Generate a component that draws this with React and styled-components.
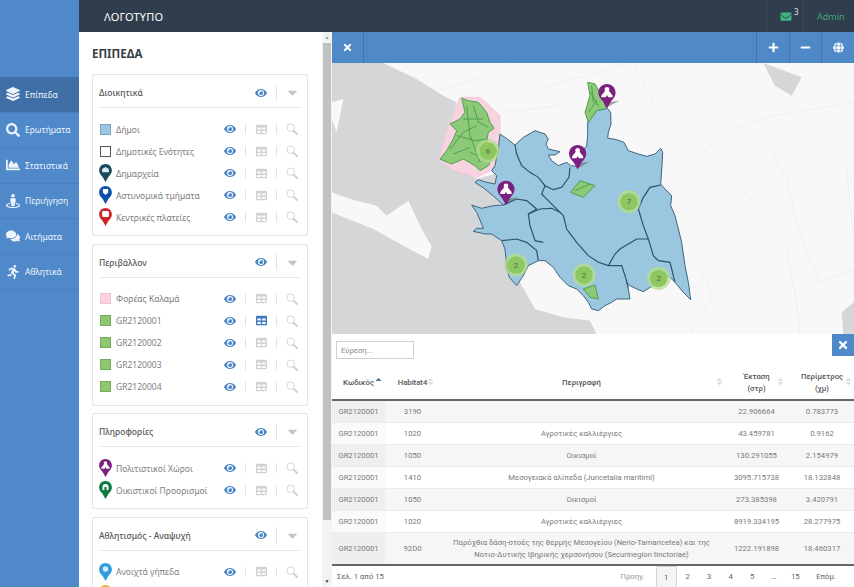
import React from "react";
import styled, { createGlobalStyle } from "styled-components";
import {
  FaCaretDown,
  FaChartArea,
  FaComments,
  FaEnvelope,
  FaEye,
  FaGlobe,
  FaLayerGroup,
  FaMinus,
  FaPlus,
  FaRunning,
  FaSearch,
  FaSort,
  FaSortUp,
  FaStreetView,
  FaTable,
  FaTimes,
} from "react-icons/fa";

const navItems = [
  { label: "Επίπεδα", Icon: FaLayerGroup, active: true },
  { label: "Ερωτήματα", Icon: FaSearch },
  { label: "Στατιστικά", Icon: FaChartArea },
  { label: "Περιήγηση", Icon: FaStreetView },
  { label: "Αιτήματα", Icon: FaComments },
  { label: "Αθλητικά", Icon: FaRunning },
];

const layerGroups = [
  {
    title: "Διοικητικά",
    layers: [
      { name: "Δήμοι", swatch: ["#9cc8e4", "#7da3bd"] },
      { name: "Δημοτικές Ενότητες", swatch: ["#ffffff", "#555555"] },
      { name: "Δημαρχεία", pin: "#1c4a5a", glyph: "hall" },
      { name: "Αστυνομικά τμήματα", pin: "#0f4fa8", glyph: "shield" },
      { name: "Κεντρικές πλατείες", pin: "#d0232a", glyph: "square" },
    ],
  },
  {
    title: "Περιβάλλον",
    layers: [
      { name: "Φορέας Καλαμά", swatch: ["#fbd3df", "#f6c0d0"] },
      { name: "GR2120001", swatch: ["#8ec76f", "#74ad5c"], tableOn: true },
      { name: "GR2120002", swatch: ["#8ec76f", "#74ad5c"] },
      { name: "GR2120003", swatch: ["#8ec76f", "#74ad5c"] },
      { name: "GR2120004", swatch: ["#8ec76f", "#74ad5c"] },
    ],
  },
  {
    title: "Πληροφορίες",
    layers: [
      { name: "Πολιτιστικοί Χώροι", pin: "#7c1f7e", glyph: "tent" },
      { name: "Οικιστικοί Προορισμοί", pin: "#0e7a44", glyph: "arch" },
    ],
  },
  {
    title: "Αθλητισμός - Αναψυχή",
    layers: [
      { name: "Ανοιχτά γήπεδα", pin: "#2f9fdc", glyph: "ball" },
      { name: "", pin: "#f0b030", glyph: "square" },
    ],
  },
];

const columns = [
  { label: "Κωδικός", width: 53, sorted: true, sortRight: 3 },
  { label: "Habitat4", width: 55 },
  { label: "Περιγραφή", width: 283, sortRight: 0 },
  { label: "Έκταση\n(στρ)", width: 67 },
  { label: "Περίμετρος\n(χμ)", width: 64, sortRight: 2 },
];

const rows = [
  ["3190", "", "22.906664", "0.783773"],
  ["1020", "Αγροτικές καλλιέργιες", "43.459781", "0.9162"],
  ["1050", "Οικισμοί", "130.291055", "2.154979"],
  ["1410", "Μεσογειακά αλίπεδα (Juncetalia maritimi)", "3095.715738", "18.132848"],
  ["1050", "Οικισμοί", "273.385398", "3.420791"],
  ["1020", "Αγροτικές καλλιέργιες", "8919.334195", "28.277975"],
  [
    "92D0",
    "Παρόχθια δάση-στοές της θερμής Μεσογείου (Nerio-Tamaricetea) και της Νοτιο-Δυτικής Ιβηρικής χερσονήσου (Securinegion tinctoriae)",
    "1222.191898",
    "18.460317",
  ],
];

const pages = ["1", "2", "3", "4", "5", "…", "15"];

const outline =
  "M503 160L530 125L562 118L572 130L573 165L565 190L563 207L590 212L612 220L625 245L655 255L680 262L705 255L722 238L728 250L726 290L722 345L735 360L755 380L752 410L765 440L775 480L785 520L795 590L805 640L812 692L790 670L765 640L745 620L735 630L715 640L695 652L670 668L650 660L630 650L620 640L625 660L630 690L612 690L590 690L575 700L555 710L535 725L515 720L505 700L490 680L470 660L445 650L420 625L400 595L375 575L355 575L325 590L310 620L290 650L268 625L260 590L255 540L245 515L215 495L195 495L160 487L170 478L190 478L185 465L170 430L155 408L185 418L220 410L250 408L225 385L195 360L165 340L175 332L200 340L225 345L230 320L215 305L225 290L235 240L240 195L262 210L285 228L310 205L345 185L375 195L385 210L378 225L385 240L420 248L405 258L385 258L395 275L415 290L440 280L452 290L470 292L475 270L490 240L500 232L503 200Z";

const borders = [
  "M285 228L290 255L305 290L330 310L355 325L375 350L400 362L425 355L447 325L450 295",
  "M375 350L365 375L375 385L400 410L430 440L440 480L470 520L505 560L535 580L565 590L605 590L615 620L625 655",
  "M250 408L290 390L320 395L350 420L325 435L330 470L345 515L370 520",
  "M325 435L360 420L395 418L420 430",
  "M245 515L290 510L320 520L350 545L355 575",
  "M655 420L670 385L690 355L722 348",
  "M655 420L670 470L685 510L700 560L715 575L750 580L765 640",
  "M565 590L585 555L600 540L625 525L650 510L685 510",
];

const roads = [
  "M60 60L120 45L190 25L260 -17",
  "M320 100L350 60L420 40L500 20L610 -17",
  "M640 -17L700 100L760 170L860 240L960 170L1060 140L1302 100",
  "M850 240L940 330L1000 400L1100 540L1130 700L1140 795",
  "M1000 180L1050 240L1100 330L1140 500L1200 640L1302 600",
  "M250 130L420 110L480 130",
  "M1210 190L1280 300L1300 500",
  "M840 600L880 680L810 795",
];

const greenVeins =
  "M90 240L130 190L170 170M140 110L150 200L180 280M110 200L165 215L205 210M130 150L190 150M150 250L200 270M100 255L150 235M160 110L175 160L205 175M512 70L535 112M505 130L530 95M515 50L520 100M465 365L510 345";

const clusters = [
  { x: 204, y: 246, n: 6 },
  { x: 627, y: 398, n: 7 },
  { x: 288, y: 588, n: 2 },
  { x: 492, y: 618, n: 2 },
  { x: 716, y: 628, n: 2 },
];

const mapPins = [
  { x: 232, y: 335 },
  { x: 447, y: 228 },
  { x: 535, y: 45 },
];

const GlobalStyle = createGlobalStyle`
  html, body {
    margin: 0;
    height: 100%;
    overflow: hidden;
    background: #fff;
  }
  #root {
    height: 100%;
  }
`;

const Page = styled.div`
  display: flex;
  height: 587px;
  font-family: "Noto Sans", sans-serif;
  overflow: hidden;
`;

const Sidebar = styled.nav`
  width: 79px;
  flex: none;
  padding-top: 77px;
  background: #4f89c9;
`;

const NavItem = styled.div`
  display: flex;
  align-items: center;
  gap: 5px;
  height: 35.5px;
  box-sizing: border-box;
  padding-left: 6px;
  color: #eef4fb;
  font-size: 8.5px;
  background: ${(p) => (p.$active ? "#3f6fa6" : "transparent")};
  border-bottom: 1px solid #4880bf;
  svg {
    width: 14px;
    height: 14px;
    flex: none;
  }
`;

const Content = styled.div`
  flex: 1;
  min-width: 0;
  display: flex;
  flex-direction: column;
`;

const TopBar = styled.header`
  display: flex;
  align-items: stretch;
  height: 32px;
  flex: none;
  background: #2f3d4c;
  color: #fff;
`;

const Logo = styled.div`
  flex: 1;
  align-self: center;
  padding-left: 25px;
  font-size: 11px;
  letter-spacing: 0.2px;
`;

const Mail = styled.div`
  position: relative;
  width: 38px;
  display: flex;
  align-items: center;
  padding-left: 13px;
  box-sizing: border-box;
  border-left: 1px solid #3b4958;
  border-right: 1px solid #3b4958;
  color: #3fb37f;
  svg {
    width: 12px;
    height: 11px;
  }
`;

const MailCount = styled.sup`
  position: absolute;
  left: 27px;
  top: 8px;
  font-size: 8px;
  line-height: 1;
  color: #dfe6ea;
`;

const UserName = styled.div`
  width: 50px;
  display: flex;
  align-items: center;
  padding-left: 13px;
  box-sizing: border-box;
  font-size: 9px;
  color: #3fa67a;
`;

const Body = styled.div`
  flex: 1;
  min-height: 0;
  display: flex;
`;

const LayerPanel = styled.aside`
  width: 243px;
  flex: none;
  box-sizing: border-box;
  padding: 15px 14px 0 13px;
  overflow: hidden;
  background: #fff;
`;

const PanelTitle = styled.h2`
  margin: 0 0 14px;
  font-size: 11.5px;
  line-height: 13px;
  font-weight: 700;
  color: #3a3f44;
`;

const Card = styled.section`
  margin-bottom: 7.5px;
  padding: 0 6px 7px;
  background: #fff;
  border: 1px solid #e4e4e4;
  border-radius: 3px;
  box-shadow: 0 0 1px rgba(0, 0, 0, 0.08);
`;

const CardHeader = styled.div`
  display: flex;
  align-items: center;
  height: 29px;
  padding-top: 3px;
  margin-bottom: 10px;
  border-bottom: 1px solid #e8e8e8;
  color: #555;
  font-size: 8.5px;
  font-weight: 500;
`;

const RowLabel = styled.div`
  flex: 1;
  min-width: 0;
  white-space: nowrap;
`;

const Layer = styled.div`
  display: flex;
  align-items: center;
  height: 22px;
  color: #7d7d7d;
  font-size: 8.5px;
`;

const LegendSlot = styled.div`
  width: 13px;
  margin-right: 4px;
  flex: none;
  display: flex;
  justify-content: center;
`;

const Swatch = styled.span`
  width: 11px;
  height: 11px;
  box-sizing: border-box;
  background: ${(p) => p.$fill};
  border: 1px solid ${(p) => p.$stroke};
`;

const Actions = styled.div`
  display: flex;
  align-items: center;
  margin-right: -6px;
`;

const Action = styled.div`
  width: 30px;
  display: flex;
  justify-content: center;
  align-items: center;
  color: ${(p) => p.$color || "#cfcfcf"};
  svg {
    width: ${(p) => p.$size || 11}px;
    height: ${(p) => p.$size || 11}px;
  }
`;

const Divider = styled.span`
  width: 1px;
  height: ${(p) => p.$height || 10}px;
  background: #e2e2e2;
`;

const Scrollbar = styled.div`
  width: 10px;
  flex: none;
  display: flex;
  flex-direction: column;
  align-items: center;
  background: #f3f3f3;
`;

const ScrollArrow = styled.span`
  flex: none;
  height: 11px;
  line-height: 11px;
  font-size: 5px;
  color: ${(p) => p.$color};
`;

const ScrollTrack = styled.div`
  flex: 1;
  width: 100%;
`;

const ScrollThumb = styled.div`
  width: 8px;
  height: 477px;
  background: #c1c1c1;
`;

const Main = styled.main`
  flex: 1;
  min-width: 0;
  display: flex;
  flex-direction: column;
`;

const MapBar = styled.div`
  display: flex;
  height: 31px;
  flex: none;
  background: #5089c8;
  color: #fff;
`;

const MapBarButton = styled.div`
  width: ${(p) => p.$width || 32}px;
  flex: none;
  display: flex;
  align-items: center;
  justify-content: center;
  box-sizing: border-box;
  border-${(p) => p.$edge || "left"}: 1px solid #4274ad;
  svg {
    width: 11px;
    height: 11px;
  }
`;

const Spacer = styled.div`
  flex: 1;
`;

const MapArea = styled.div`
  height: 271px;
  flex: none;
  background: #f8f8f8;
  overflow: hidden;
  svg {
    display: block;
  }
`;

const TablePanel = styled.section`
  flex: 1;
  min-height: 0;
  display: flex;
  flex-direction: column;
  background: #fff;
  font-family: Roboto, sans-serif;
  font-size: 7.7px;
  color: #7a7a7a;
`;

const TableTools = styled.div`
  display: flex;
  justify-content: space-between;
  height: 28px;
  flex: none;
  padding-left: 4px;
`;

const SearchBox = styled.input`
  width: 78px;
  height: 18px;
  margin-top: 7px;
  box-sizing: border-box;
  padding: 0 4px;
  border: 1px solid #cfcfcf;
  outline: none;
  font: inherit;
  &::placeholder {
    color: #8b8b8b;
  }
`;

const TableClose = styled.div`
  width: 22px;
  height: 22px;
  display: flex;
  align-items: center;
  justify-content: center;
  background: #4f89c9;
  color: #fff;
  svg {
    width: 12px;
    height: 12px;
  }
`;

const DataTable = styled.table`
  width: 522px;
  flex: none;
  table-layout: fixed;
  border-collapse: collapse;
  border-bottom: 2px solid #666;
`;

const HeadRow = styled.tr`
  height: 38px;
  border-bottom: 2px solid #666;
`;

const HeadCell = styled.th`
  position: relative;
  padding: 4px 0 0;
  font-weight: 500;
  line-height: 12px;
  color: #555;
  white-space: pre-line;
`;

const SortMark = styled.span`
  position: absolute;
  right: ${(p) => (p.$right === undefined ? 6 : p.$right)}px;
  top: 15px;
  color: ${(p) => (p.$on ? "#4f6fa0" : "#dedede")};
  svg {
    display: block;
    width: 7px;
    height: 9px;
  }
`;

const BodyRow = styled.tr`
  height: ${(p) => (p.$tall ? 33 : 22)}px;
  background: ${(p) => (p.$odd ? "#f6f6f6" : "#fff")};
  border-bottom: 1px solid #ececec;
`;

const Cell = styled.td`
  padding: 1px 6px 0;
  text-align: center;
  line-height: 12px;
  background: ${(p) => (p.$sorted ? (p.$odd ? "#efefef" : "#fafafa") : "transparent")};
`;

const TableFooter = styled.div`
  flex: 1;
  display: flex;
  justify-content: space-between;
  align-items: stretch;
  padding: 0 8px 0 5px;
`;

const PageInfo = styled.div`
  align-self: center;
  color: #666;
`;

const Pager = styled.div`
  display: flex;
  align-items: stretch;
`;

const PageLink = styled.div`
  width: ${(p) => p.$width || 21.5}px;
  display: flex;
  align-items: center;
  justify-content: center;
  box-sizing: border-box;
  color: ${(p) => (p.$muted ? "#999" : "#666")};
  ${(p) =>
    p.$current &&
    `
    background: #f4f4f4;
    border: 1px solid #d4d4d4;
    border-bottom: 0;
    border-radius: 2px 2px 0 0;
  `}
`;

const Magnifier = () => (
  <svg viewBox="0 0 14 14">
    <circle cx="5.5" cy="5.5" r="4.4" fill="none" stroke="currentColor" strokeWidth="1" />
    <path d="M8.8 8.8L12.8 12.8" stroke="currentColor" strokeWidth="2.2" strokeLinecap="round" />
  </svg>
);

const Legend = ({ layer }) =>
  layer.pin ? (
    <svg width="13" height="18" viewBox="0 0 17 24">
      <PinShape color={layer.pin} glyph={layer.glyph} />
    </svg>
  ) : (
    <Swatch $fill={layer.swatch[0]} $stroke={layer.swatch[1]} />
  );

function PinGlyph({ glyph }) {
  if (glyph === "hall") return <path d="M4 6.5L8.5 4L13 6.5V11H4Z" fill="#dfe8ec" />;
  if (glyph === "shield") return <path d="M5 4H12V8.5L8.5 12L5 8.5Z" fill="#fff" />;
  if (glyph === "square") return <rect x="4" y="4" width="9" height="8" rx="1.5" fill="#fff" />;
  if (glyph === "arch") return <path d="M4.5 12V8a4 4 0 0 1 8 0v4H10V9a1.5 1.5 0 0 0-3 0v3Z" fill="#fff" />;
  if (glyph === "ball") return <circle cx="8.5" cy="8" r="3.6" fill="#d7eefa" />;
  return (
    <g fill="#fff">
      <circle cx="8.5" cy="5.2" r="2.3" />
      <path d="M7.2 6L3 11.2V13H7.3L8.5 10.8L9.7 13H14V11.2L9.8 6Z" />
    </g>
  );
}

function PinShape({ color, glyph = "tent" }) {
  return (
    <g>
      <path
        d="M8.5 0C3.8 0 0 3.8 0 8.5c0 3.7 2.4 6.2 4.5 8.5L8.5 24l4-7c2.1-2.3 4.5-4.8 4.5-8.5C17 3.8 13.2 0 8.5 0z"
        fill={color}
      />
      <PinGlyph glyph={glyph} />
    </g>
  );
}

function MapDrawing() {
  return (
    <svg width="522" height="271" viewBox="-264 -18 1566 813">
      <path
        fill="#d4d6d8"
        d="M-265 -18L-110 -18L-10 30L70 80L110 100L60 270L170 330L240 310L280 420L280 520L300 640L345 720L430 745L510 755L530 795L-265 795Z"
      />
      <path
        fill="#f8f8f8"
        d="M-265 370L-210 390L-130 410L-100 440L-35 395L10 490L35 530L25 570L-50 530L-140 480L-265 430Z"
      />
      <path fill="#f8f8f8" d="M-265 100L-230 90L-250 190L-265 150Z" />
      <path fill="#d4d6d8" d="M1030 -18L1145 25L1115 80L1065 50Z" />
      <path fill="#d4d6d8" d="M1302 700L1265 730L1270 795L1302 795Z" />
      {roads.map((d) => (
        <path key={d} d={d} fill="none" stroke="#eeeeee" strokeWidth="2.5" />
      ))}
      <path
        fill="#f7d3e0"
        stroke="#f2bfd2"
        strokeWidth="2"
        d="M120 85L182 85L240 140L240 195L225 300L170 325L100 305L55 270L70 220L85 170Z"
      />
      <path d={outline} fill="#9ac6e0" />
      {borders.map((d) => (
        <path key={d} d={d} fill="none" stroke="#2b5069" strokeWidth="3.5" />
      ))}
      <path d={outline} fill="none" stroke="#3e6580" strokeWidth="3" />
      <g fill="#8cc978" stroke="#4ca24d" strokeWidth="3">
        <path d="M125 88L145 95L175 100L200 130L210 160L222 178L205 190L200 215L215 270L205 290L180 305L165 290L130 270L95 285L60 270L80 245L100 210L110 185L90 165L120 150L135 130Z" />
        <path d="M503 40L525 45L545 80L560 118L530 125L505 160L495 130L510 80Z" />
        <path d="M480 335L525 350L490 385L452 370Z" />
        <path d="M490 660L525 648L535 690L510 685Z" />
      </g>
      <path d={greenVeins} fill="none" stroke="#4ca24d" strokeWidth="3" />
      {clusters.map((c) => (
        <g key={c.x}>
          <circle cx={c.x} cy={c.y} r="35" fill="#b5dc8c" opacity="0.75" />
          <circle cx={c.x} cy={c.y} r="26" fill="#8cc85f" />
          <text
            x={c.x}
            y={c.y + 8}
            textAnchor="middle"
            fontFamily="Roboto, sans-serif"
            fontSize="24"
            fill="#4c6a45"
          >
            {c.n}
          </text>
        </g>
      ))}
      {mapPins.map((p) => (
        <g key={p.x}>
          <path
            d={`M${p.x + 26} ${p.y + 70}L${p.x + 62} ${p.y + 50}L${p.x + 34} ${p.y + 54}Z`}
            fill="#666"
            opacity="0.6"
          />
          <g transform={`translate(${p.x} ${p.y}) scale(3.05)`}>
            <PinShape color="#7c1f7e" />
          </g>
        </g>
      ))}
    </svg>
  );
}

export default function App() {
  return (
    <Page>
      <GlobalStyle />
      <Sidebar>
        {navItems.map(({ label, Icon, active }) => (
          <NavItem key={label} $active={active}>
            <Icon />
            {label}
          </NavItem>
        ))}
      </Sidebar>
      <Content>
        <TopBar>
          <Logo>ΛΟΓΟΤΥΠΟ</Logo>
          <Mail>
            <FaEnvelope />
            <MailCount>3</MailCount>
          </Mail>
          <UserName>Admin</UserName>
        </TopBar>
        <Body>
          <LayerPanel>
            <PanelTitle>ΕΠΙΠΕΔΑ</PanelTitle>
            {layerGroups.map((group) => (
              <Card key={group.title}>
                <CardHeader>
                  <RowLabel>{group.title}</RowLabel>
                  <Actions>
                    <Action $color="#4a86c5" $size={12}>
                      <FaEye />
                    </Action>
                    <Divider $height={16} />
                    <Action $color="#c4c4c4" $size={15}>
                      <FaCaretDown />
                    </Action>
                  </Actions>
                </CardHeader>
                {group.layers.map((layer) => (
                  <Layer key={layer.name || layer.pin}>
                    <LegendSlot>
                      <Legend layer={layer} />
                    </LegendSlot>
                    <RowLabel>{layer.name}</RowLabel>
                    <Actions>
                      <Action $color="#4a86c5" $size={12}>
                        <FaEye />
                      </Action>
                      <Divider />
                      <Action $color={layer.tableOn ? "#3f78bd" : "#d2d2d2"}>
                        <FaTable />
                      </Action>
                      <Divider />
                      <Action $color="#d0d0d0" $size={12}>
                        <Magnifier />
                      </Action>
                    </Actions>
                  </Layer>
                ))}
              </Card>
            ))}
          </LayerPanel>
          <Scrollbar>
            <ScrollArrow $color="#999">▲</ScrollArrow>
            <ScrollThumb />
            <ScrollTrack />
            <ScrollArrow $color="#333">▼</ScrollArrow>
          </Scrollbar>
          <Main>
            <MapBar>
              <MapBarButton $edge="right">
                <FaTimes />
              </MapBarButton>
              <Spacer />
              <MapBarButton $width={33}>
                <FaPlus />
              </MapBarButton>
              <MapBarButton>
                <FaMinus />
              </MapBarButton>
              <MapBarButton $width={33}>
                <FaGlobe />
              </MapBarButton>
            </MapBar>
            <MapArea>
              <MapDrawing />
            </MapArea>
            <TablePanel>
              <TableTools>
                <SearchBox placeholder="Εύρεση..." />
                <TableClose>
                  <FaTimes />
                </TableClose>
              </TableTools>
              <DataTable>
                <colgroup>
                  {columns.map((c) => (
                    <col key={c.label} width={c.width} />
                  ))}
                </colgroup>
                <thead>
                  <HeadRow>
                    {columns.map((c) => (
                      <HeadCell key={c.label}>
                        {c.label}
                        <SortMark $on={c.sorted} $right={c.sortRight}>
                          {c.sorted ? <FaSortUp /> : <FaSort />}
                        </SortMark>
                      </HeadCell>
                    ))}
                  </HeadRow>
                </thead>
                <tbody>
                  {rows.map((row, i) => (
                    <BodyRow key={row[2]} $odd={i % 2 === 0} $tall={i === 6}>
                      <Cell $sorted $odd={i % 2 === 0}>
                        GR2120001
                      </Cell>
                      {row.map((value, j) => (
                        <Cell key={j}>{value}</Cell>
                      ))}
                    </BodyRow>
                  ))}
                </tbody>
              </DataTable>
              <TableFooter>
                <PageInfo>Σελ. 1 από 15</PageInfo>
                <Pager>
                  <PageLink $width={46} $muted>
                    Προηγ.
                  </PageLink>
                  {pages.map((n) => (
                    <PageLink key={n} $current={n === "1"}>
                      {n}
                    </PageLink>
                  ))}
                  <PageLink $width={40}>Επόμ.</PageLink>
                </Pager>
              </TableFooter>
            </TablePanel>
          </Main>
        </Body>
      </Content>
    </Page>
  );
}
